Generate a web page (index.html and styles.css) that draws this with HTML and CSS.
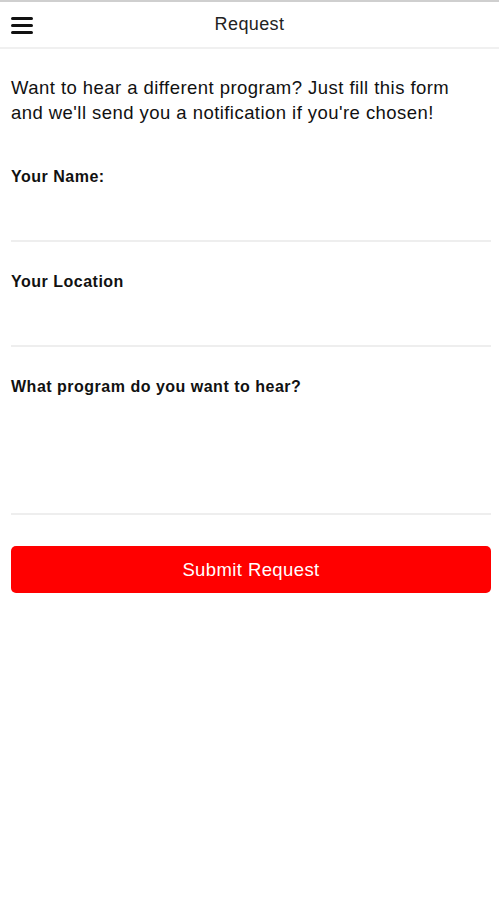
FILE: index.html
```html
<!DOCTYPE html>
<html lang="en">
<head>
    <meta charset="UTF-8">
    <meta name="viewport" content="width=device-width, initial-scale=1.0">
    <title>Request</title>
    <link rel="stylesheet" href="styles.css">
</head>
<body>

    <div class="statusline"></div>

    <header class="navbar">
        <button class="menu-btn" aria-label="Menu">
            <svg width="22" height="18" viewBox="0 0 22 18">
                <rect x="0" y="1" width="22" height="3" rx="1.5" fill="#111"/>
                <rect x="0" y="8" width="22" height="3" rx="1.5" fill="#111"/>
                <rect x="0" y="15" width="22" height="3" rx="1.5" fill="#111"/>
            </svg>
        </button>
        <h1>Request</h1>
        <span></span>
    </header>

    <main class="request">
        <p class="intro">Want to hear a different program? Just fill this form and we'll send you a notification if you're chosen!</p>

        <div class="field">
            <label for="name">Your Name:</label>
            <input type="text" id="name">
        </div>

        <div class="field">
            <label for="location">Your Location</label>
            <input type="text" id="location">
        </div>

        <div class="field">
            <label for="program">What program do you want to hear?</label>
            <textarea id="program"></textarea>
        </div>

        <button class="submit">Submit Request</button>
    </main>

</body>
</html>
```

FILE: styles.css
```css
body {
    font-family: "Liberation Sans", Arial, sans-serif;
    margin: 0;
    background-color: #fff;
    color: #1a1a1a;
}
.statusline {
    height: 2px;
    background-color: #cfcfcf;
}
.navbar {
    display: grid;
    grid-template-columns: 44px 1fr 44px;
    align-items: center;
    height: 45px;
    border-bottom: 2px solid #f0f0f0;
}
.menu-btn {
    display: flex;
    align-items: center;
    padding: 0 0 0 11px;
    margin: 0;
    border: none;
    background: none;
    height: 100%;
}
.navbar h1 {
    margin: 0;
    text-align: center;
    font-size: 18px;
    font-weight: normal;
    letter-spacing: 0.4px;
    color: #222;
}
.request {
    padding: 0 8px 0 11px;
}
.intro {
    margin: 26px 8px 12px 0;
    font-size: 18.5px;
    line-height: 25px;
    letter-spacing: 0.45px;
    color: #111;
}
.field {
    padding-top: 30px;
}
.field label {
    display: block;
    font-size: 16px;
    line-height: 20px;
    font-weight: bold;
    letter-spacing: 0.5px;
    color: #111;
}
.field input, .field textarea {
    display: block;
    width: 100%;
    height: 55px;
    padding: 0;
    margin: 0;
    border: none;
    border-bottom: 2px solid #eee;
    box-sizing: border-box;
    resize: none;
    outline: none;
}
.field textarea {
    height: 118px;
}
.submit {
    display: block;
    width: 100%;
    height: 47px;
    margin-top: 31px;
    border: none;
    border-radius: 5px;
    background-color: #ff0000;
    color: #fff;
    font-family: "Liberation Sans", Arial, sans-serif;
    font-size: 18.5px;
    letter-spacing: 0.4px;
}
```
